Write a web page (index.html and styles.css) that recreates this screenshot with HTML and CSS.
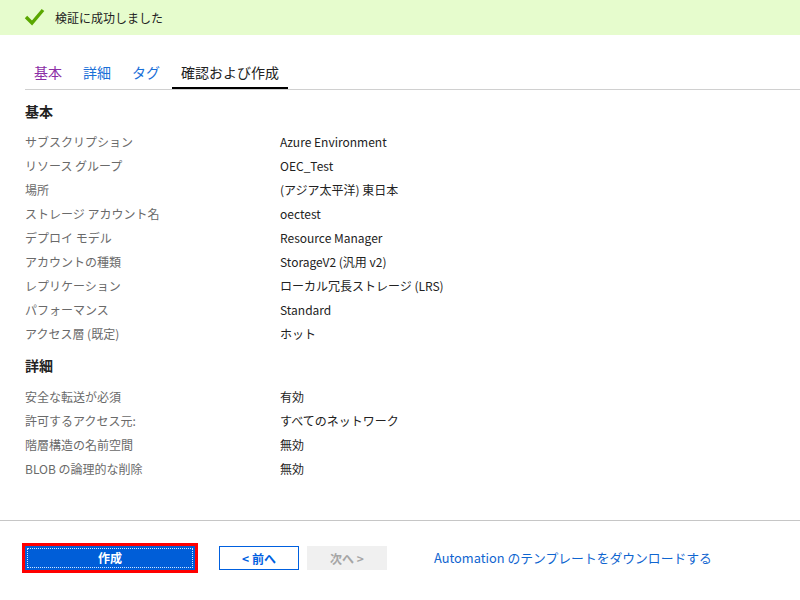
FILE: index.html
```html
<!DOCTYPE html>
<html lang="ja">
<head>
    <meta charset="UTF-8">
    <meta name="viewport" content="width=device-width, initial-scale=1.0">
    <title>確認および作成</title>
    <link rel="stylesheet" href="styles.css">
</head>
<body>
    <div class="banner">
        <svg class="check" width="21" height="18" viewBox="0 0 21 18">
            <polyline points="2,9 8,15 19,2" fill="none" stroke="#5aa700" stroke-width="3.4"/>
        </svg>
        <span>検証に成功しました</span>
    </div>

    <nav class="tabs">
        <a class="tab visited">基本</a>
        <a class="tab">詳細</a>
        <a class="tab">タグ</a>
        <a class="tab active">確認および作成</a>
    </nav>

    <main class="summary">
        <h2>基本</h2>
        <div class="row"><span class="label">サブスクリプション</span><span>Azure Environment</span></div>
        <div class="row"><span class="label">リソース グループ</span><span>OEC_Test</span></div>
        <div class="row"><span class="label">場所</span><span>(アジア太平洋) 東日本</span></div>
        <div class="row"><span class="label">ストレージ アカウント名</span><span>oectest</span></div>
        <div class="row"><span class="label">デプロイ モデル</span><span>Resource Manager</span></div>
        <div class="row"><span class="label">アカウントの種類</span><span>StorageV2 (汎用 v2)</span></div>
        <div class="row"><span class="label">レプリケーション</span><span>ローカル冗長ストレージ (LRS)</span></div>
        <div class="row"><span class="label">パフォーマンス</span><span>Standard</span></div>
        <div class="row"><span class="label">アクセス層 (既定)</span><span>ホット</span></div>

        <h2 class="next-section">詳細</h2>
        <div class="row"><span class="label">安全な転送が必須</span><span>有効</span></div>
        <div class="row"><span class="label">許可するアクセス元:</span><span>すべてのネットワーク</span></div>
        <div class="row"><span class="label">階層構造の名前空間</span><span>無効</span></div>
        <div class="row"><span class="label">BLOB の論理的な削除</span><span>無効</span></div>
    </main>

    <footer class="footer">
        <div class="highlight">
            <button class="btn primary"><span class="focus">作成</span></button>
        </div>
        <button class="btn secondary">&lt; 前へ</button>
        <button class="btn disabled">次へ &gt;</button>
        <a class="download">Automation のテンプレートをダウンロードする</a>
    </footer>
</body>
</html>
```

FILE: styles.css
```css
body {
    margin: 0;
    height: 600px;
    display: flex;
    flex-direction: column;
    font-family: "Noto Sans CJK JP", "Noto Sans", sans-serif;
    font-size: 12px;
    color: #222;
    background-color: #fff;
}
.banner {
    height: 35px;
    background-color: #e6fccd;
    display: flex;
    align-items: center;
    padding-left: 24px;
    gap: 10px;
    font-size: 12px;
    color: #222;
}
.check {
    margin-top: -1px;
}
.tabs {
    display: flex;
    margin: 20px 0 0 25px;
    border-bottom: 1px solid #d0d0d0;
}
.tab {
    padding: 0 9px;
    margin-right: 3px;
    height: 34px;
    line-height: 34px;
    font-size: 14px;
    color: #1a6fd8;
    box-sizing: border-box;
}
.tab.visited {
    color: #8c2ea6;
}
.tab.active {
    color: #222;
    border-bottom: 2px solid #000;
    line-height: 34px;
}
.summary {
    flex: 1;
    padding-left: 25px;
}
.summary h2 {
    margin: 11px 0 9px;
    font-size: 14px;
    line-height: 20px;
    font-weight: bold;
}
.summary h2.next-section {
    margin: 9px 0 10px;
}
.row {
    display: grid;
    grid-template-columns: 255px 1fr;
    height: 24px;
    line-height: 24px;
}
.label {
    color: #6a6a6a;
}
.footer {
    height: 80px;
    box-sizing: border-box;
    border-top: 1px solid #c6c6c6;
    display: flex;
    align-items: flex-start;
    padding: 22px 0 0 22px;
}
.highlight {
    border: 3px solid #f00;
    margin-right: 21px;
    display: flex;
}
.btn {
    height: 24px;
    font-family: inherit;
    font-size: 12px;
    font-weight: bold;
    border: none;
    padding: 0;
    cursor: pointer;
}
.primary {
    width: 170px;
    background-color: #005ed8;
    color: #fff;
    padding: 2px;
}
.focus {
    display: block;
    height: 100%;
    box-sizing: border-box;
    border: 1px dotted #cfe6ff;
    line-height: 18px;
}
.secondary {
    margin-top: 3px;
    width: 80px;
    background-color: #fff;
    border: 1px solid #0060df;
    color: #0060df;
    margin-right: 8px;
}
.disabled {
    margin-top: 3px;
    width: 80px;
    background-color: #f0f0f0;
    color: #a6a6a6;
    cursor: default;
    margin-right: 47px;
}
.download {
    margin-top: 3px;
    line-height: 24px;
    font-size: 12.8px;
    color: #0f65d0;
    cursor: pointer;
}
```
